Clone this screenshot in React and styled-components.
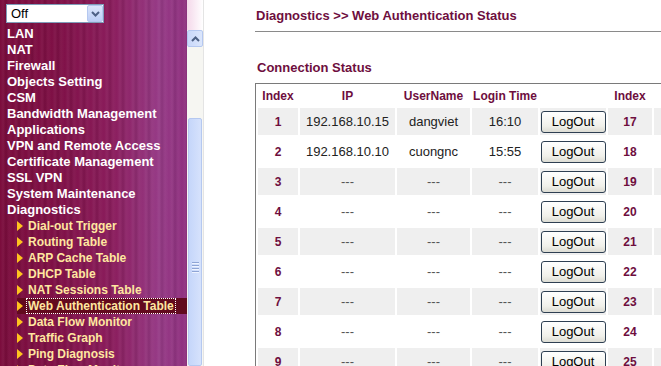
import styled, { createGlobalStyle } from 'styled-components';

const GlobalStyle = createGlobalStyle`
    html, body {
        margin: 0;
        padding: 0;
        background: #fff;
        overflow: hidden;
    }
    body {
        font-family: "Liberation Sans", Arial, sans-serif;
    }
`

const menu = [
    'LAN', 'NAT', 'Firewall', 'Objects Setting', 'CSM', 'Bandwidth Management',
    'Applications', 'VPN and Remote Access', 'Certificate Management', 'SSL VPN',
    'System Maintenance', 'Diagnostics',
]

const subMenu = [
    'Dial-out Trigger', 'Routing Table', 'ARP Cache Table', 'DHCP Table',
    'NAT Sessions Table', 'Web Authentication Table', 'Data Flow Monitor',
    'Traffic Graph', 'Ping Diagnosis', 'Data Flow Monitor',
]

const rows = [
    { ip: '192.168.10.15', user: 'dangviet', time: '16:10' },
    { ip: '192.168.10.10', user: 'cuongnc', time: '15:55' },
    ...Array.from({ length: 7 }, () => ({ ip: '---', user: '---', time: '---' })),
]

const App = () => {
    return (
        <Page>
            <GlobalStyle />
            <Sidebar>
                <Select>
                    <span>Off</span>
                    <DropButton>
                        <svg width="9" height="6" viewBox="0 0 9 6">
                            <path d="M1 1 L4.5 4.5 L8 1" fill="none" stroke="#4d6185" strokeWidth="2" />
                        </svg>
                    </DropButton>
                </Select>
                <Menu>
                    {menu.map((m) => <MenuItem key={m}>{m}</MenuItem>)}
                    {subMenu.map((m, i) => (
                        <SubItem key={i} $active={m === 'Web Authentication Table'}>
                            <Bullet />
                            <span>{m}</span>
                        </SubItem>
                    ))}
                </Menu>
            </Sidebar>
            <Scroll>
                <ScrollTop />
                <ArrowBtn>
                    <svg width="9" height="6" viewBox="0 0 9 6">
                        <path d="M1 5 L4.5 1.5 L8 5" fill="none" stroke="#4d6185" strokeWidth="2" />
                    </svg>
                </ArrowBtn>
                <Track>
                    <Thumb>
                        <Grip>
                            <i /><i /><i /><i />
                        </Grip>
                    </Thumb>
                </Track>
            </Scroll>
            <Main>
                <Title>Diagnostics &gt;&gt; Web Authentication Status</Title>
                <Section>Connection Status</Section>
                <Table>
                    <colgroup>
                        <col style={{ width: 40 }} />
                        <col style={{ width: 95 }} />
                        <col style={{ width: 73 }} />
                        <col style={{ width: 66 }} />
                        <col style={{ width: 66 }} />
                        <col style={{ width: 44 }} />
                        <col style={{ width: 95 }} />
                        <col style={{ width: 73 }} />
                        <col style={{ width: 66 }} />
                        <col style={{ width: 66 }} />
                    </colgroup>
                    <thead>
                        <tr>
                            <Th>Index</Th>
                            <Th>IP</Th>
                            <Th>UserName</Th>
                            <Th>Login Time</Th>
                            <Th></Th>
                            <Th>Index</Th>
                            <Th>IP</Th>
                            <Th>UserName</Th>
                            <Th>Login Time</Th>
                            <Th></Th>
                        </tr>
                    </thead>
                    <tbody>
                        {rows.map((r, i) => (
                            <Row key={i} $shade={i % 2 === 0}>
                                <IndexCell>{i + 1}</IndexCell>
                                <Cell $dim={r.ip === '---'}>{r.ip}</Cell>
                                <Cell $dim={r.user === '---'}>{r.user}</Cell>
                                <Cell $dim={r.time === '---'}>{r.time}</Cell>
                                <Cell><Button>LogOut</Button></Cell>
                                <IndexCell>{i + 17}</IndexCell>
                                <Cell $dim>---</Cell>
                                <Cell $dim>---</Cell>
                                <Cell $dim>---</Cell>
                                <Cell><Button>LogOut</Button></Cell>
                            </Row>
                        ))}
                    </tbody>
                </Table>
            </Main>
        </Page>
    )
}

const Page = styled.div`
    display: flex;
    width: 661px;
    height: 366px;
    overflow: hidden;
`

const Sidebar = styled.aside`
    flex: 0 0 187px;
    height: 366px;
    padding-top: 4px;
    box-sizing: border-box;
    background:
        repeating-linear-gradient(90deg,
            rgba(255,255,255,0) 0px, rgba(255,255,255,0.05) 3px,
            rgba(0,0,0,0.07) 6px, rgba(255,255,255,0.04) 9px,
            rgba(0,0,0,0) 13px),
        linear-gradient(90deg, #7a0b3b 0%, #7e0f45 30%, #8a1c5c 60%, #963a86 85%, #8e2f7e 100%);
    overflow: hidden;
`

const Select = styled.div`
    margin-left: 6px;
    width: 98px;
    height: 19px;
    box-sizing: border-box;
    border: 1px solid #7f9db9;
    background: #fff;
    display: flex;
    align-items: center;
    justify-content: space-between;
    padding-left: 4px;
    span {
        font-size: 13px;
        color: #000;
    }
`

const DropButton = styled.div`
    width: 16px;
    height: 17px;
    box-sizing: border-box;
    border: 1px solid #b5c8f0;
    border-radius: 2px;
    background: linear-gradient(#dce6fb, #bccff6);
    display: flex;
    align-items: center;
    justify-content: center;
`

const Menu = styled.div`
    margin-top: 3px;
    display: flex;
    flex-direction: column;
`

const MenuItem = styled.div`
    padding-left: 7px;
    height: 16px;
    line-height: 16px;
    font-size: 13px;
    font-weight: bold;
    color: #fff;
    white-space: nowrap;
`

const SubItem = styled.div`
    margin-left: 17px;
    height: 16px;
    display: flex;
    align-items: center;
    gap: 4px;
    font-size: 12px;
    font-weight: bold;
    color: #ffe7a0;
    white-space: nowrap;
    background: ${p => p.$active ? '#620a1e' : 'transparent'};
    span {
        line-height: 14px;
        padding: 0 1px;
        outline: ${p => p.$active ? '1px dotted #fff' : 'none'};
    }
`

const Bullet = styled.i`
    width: 0;
    height: 0;
    border-top: 5px solid transparent;
    border-bottom: 5px solid transparent;
    border-left: 6px solid #ffc21f;
`

const Scroll = styled.div`
    flex: 0 0 16px;
    display: flex;
    flex-direction: column;
    background: #f6f6f2;
    border-right: 1px solid #e4e4e4;
`

const ScrollTop = styled.div`
    height: 30px;
    background: linear-gradient(90deg, #f4d8ea, #fff);
`

const ArrowBtn = styled.div`
    height: 17px;
    box-sizing: border-box;
    border: 1px solid #b5c8f0;
    border-radius: 2px;
    background: linear-gradient(90deg, #c9d8fa, #dbe6fc);
    display: flex;
    align-items: center;
    justify-content: center;
`

const Track = styled.div`
    flex: 1;
    padding-top: 71px;
    display: flex;
`

const Thumb = styled.div`
    flex: 1;
    margin: 0 1px;
    border: 1px solid #b5c8f0;
    border-radius: 2px;
    background: linear-gradient(90deg, #c5d6fa, #d6e2fc);
    display: flex;
    justify-content: center;
    padding-top: 143px;
`

const Grip = styled.div`
    display: flex;
    flex-direction: column;
    gap: 1px;
    i {
        width: 7px;
        height: 1px;
        background: #8fa5d5;
        border-bottom: 1px solid #eef3ff;
    }
`

const Main = styled.main`
    flex: 1;
    min-width: 0;
    padding: 8px 0 0 51px;
    overflow: hidden;
`

const Title = styled.h1`
    margin: 0;
    padding: 0 0 7px 1px;
    font-size: 13px;
    line-height: 16px;
    font-weight: bold;
    color: #6e0e3e;
    border-bottom: 1px solid #8a8a8a;
    white-space: nowrap;
`

const Section = styled.h2`
    margin: 28px 0 7px 2px;
    font-size: 13px;
    line-height: 16px;
    font-weight: bold;
    color: #6e0e3e;
`

const Table = styled.table`
    table-layout: fixed;
    width: 700px;
    border: 1px solid #7a7a7a;
    border-spacing: 2px 3px;
    font-family: "Liberation Sans", Arial, sans-serif;
`

const Th = styled.th`
    height: 18px;
    padding: 0;
    font-size: 12px;
    font-weight: bold;
    color: #6e0e3e;
    text-align: center;
    white-space: nowrap;
`

const Row = styled.tr`
    td {
        background: ${p => p.$shade ? '#efefef' : '#fff'};
    }
`

const Cell = styled.td`
    height: 27px;
    padding: 0;
    text-align: center;
    font-size: 13px;
    color: ${p => p.$dim ? '#555' : '#222'};
    white-space: nowrap;
`

const IndexCell = styled(Cell)`
    font-size: 12px;
    font-weight: bold;
    color: #6e0e3e;
`

const Button = styled.button`
    width: 65px;
    height: 22px;
    padding: 0;
    border: 1px solid #2e3f52;
    border-radius: 3px;
    background: linear-gradient(#ffffff, #f0f0ea 70%, #dcdcd4);
    font-family: "Liberation Sans", Arial, sans-serif;
    font-size: 13px;
    color: #000;
`

export default App
